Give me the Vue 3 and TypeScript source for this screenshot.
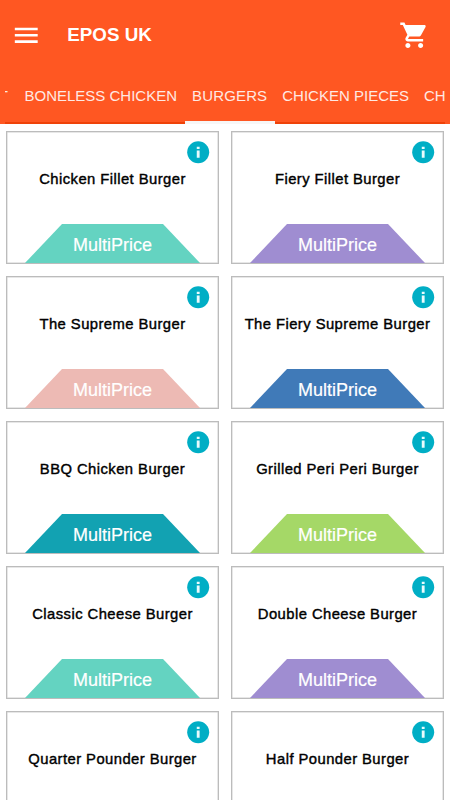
<script setup lang="ts">
interface Product {
  name: string
  tone: string
}

const tabs: string[] = ['BONELESS CHICKEN', 'BURGERS', 'CHICKEN PIECES', 'CHICKEN WINGS']
const activeTab = 'BURGERS'

const products: Product[] = [
  { name: 'Chicken Fillet Burger', tone: 'mint' },
  { name: 'Fiery Fillet Burger', tone: 'violet' },
  { name: 'The Supreme Burger', tone: 'rose' },
  { name: 'The Fiery Supreme Burger', tone: 'blue' },
  { name: 'BBQ Chicken Burger', tone: 'teal' },
  { name: 'Grilled Peri Peri Burger', tone: 'lime' },
  { name: 'Classic Cheese Burger', tone: 'mint' },
  { name: 'Double Cheese Burger', tone: 'violet' },
  { name: 'Quarter Pounder Burger', tone: 'rose' },
  { name: 'Half Pounder Burger', tone: 'blue' },
]
</script>

<template>
  <div class="screen">
    <header class="header">
      <div class="bar">
        <svg class="icon" viewBox="0 0 24 24"><path d="M3 18h18v-2H3v2zm0-5h18v-2H3v2zm0-7v2h18V6H3z" /></svg>
        <h1 class="title">EPOS UK</h1>
        <svg class="icon" viewBox="0 0 24 24">
          <path d="M7 18c-1.1 0-1.99.9-1.99 2S5.9 22 7 22s2-.9 2-2-.9-2-2-2zM1 2v2h2l3.6 7.59-1.35 2.45c-.16.28-.25.61-.25.96 0 1.1.9 2 2 2h12v-2H7.42c-.14 0-.25-.11-.25-.25l.03-.12.9-1.63h7.45c.75 0 1.41-.41 1.75-1.03l3.58-6.49c.08-.14.12-.31.12-.48 0-.55-.45-1-1-1H5.21l-.94-2H1zm16 16c-1.1 0-1.99.9-1.99 2s.89 2 1.99 2 2-.9 2-2-.9-2-2-2z" />
        </svg>
      </div>
      <nav class="tabs">
        <span class="tab partial"><span>T</span></span>
        <span v-for="tab in tabs" :key="tab" class="tab" :class="{ active: tab === activeTab }">{{ tab }}</span>
      </nav>
    </header>
    <main class="grid">
      <article v-for="p in products" :key="p.name" class="card">
        <svg class="info" viewBox="0 0 24 24">
          <circle cx="12" cy="12" r="10" />
          <path d="M10.7 10.4h2.6v6.6h-2.6zM10.7 7h2.6v2.1h-2.6z" />
        </svg>
        <div class="name">{{ p.name }}</div>
        <div class="price" :class="p.tone">MultiPrice</div>
      </article>
    </main>
  </div>
</template>

<style>
body {
  margin: 0;
  background: #fff;
}
</style>

<style scoped>
.screen {
  width: 450px;
  height: 800px;
  overflow: hidden;
  background: #fff;
  font-family: "Liberation Sans", Arial, sans-serif;
}
.header {
  height: 124px;
  box-sizing: border-box;
  background: #ff5722;
  display: flex;
  flex-direction: column;
  justify-content: space-between;
}
.bar {
  height: 70px;
  display: flex;
  align-items: center;
  padding: 0 20.6px 0 11.2px;
}
.icon {
  width: 30.5px;
  height: 30.5px;
  fill: #fff;
}
.title {
  flex: 1;
  margin: 0 0 1px 25.6px;
  font-size: 18.8px;
  line-height: 22px;
  font-weight: 700;
  color: #fff;
}
.tabs {
  height: 54px;
  margin: 0 5px;
  overflow: hidden;
  display: flex;
  box-shadow: inset 0 -2px #ef4209;
}
.tab {
  flex: none;
  box-sizing: border-box;
  padding: 0 7.5px;
  font-size: 15px;
  line-height: 51px;
  color: #ffe9e3;
}
.partial {
  width: 12px;
  padding: 0 9px 0 0;
  display: flex;
  justify-content: flex-end;
}
.active {
  letter-spacing: 0.15px;
  border-bottom: 3px solid #f7f7f7;
}
.grid {
  display: grid;
  grid-template-columns: 213px 213px;
  grid-auto-rows: 133px;
  gap: 12px;
  padding: 7px 6px;
}
.card {
  box-sizing: border-box;
  border: 1px solid #bcbcbc;
  box-shadow: inset 0 0 0 0.5px #cfcfcf;
  display: flex;
  flex-direction: column;
  align-items: center;
}
.info {
  width: 26.4px;
  height: 26.4px;
  margin: 7.3px 6.2px 0 0;
  align-self: flex-end;
  fill: #00aec5;
}
.info path {
  fill: #e9fbfd;
}
.name {
  flex: 1;
  margin-top: 4px;
  font-size: 14.8px;
  line-height: 18px;
  letter-spacing: 0.44px;
  color: #000;
  -webkit-text-stroke: 0.4px #000;
  white-space: nowrap;
}
.price {
  width: 175px;
  height: 39px;
  font-size: 18px;
  line-height: 42px;
  text-align: center;
  color: #fff;
  -webkit-text-stroke: 0.2px #fff;
  clip-path: polygon(37px 0, 138px 0, 100% 100%, 0 100%);
}
.mint { background: #64d3c1; }
.violet { background: #9f8dd1; }
.rose { background: #edbab4; }
.blue { background: #407ab8; }
.teal { background: #12a2b2; }
.lime { background: #a5d867; }
</style>
